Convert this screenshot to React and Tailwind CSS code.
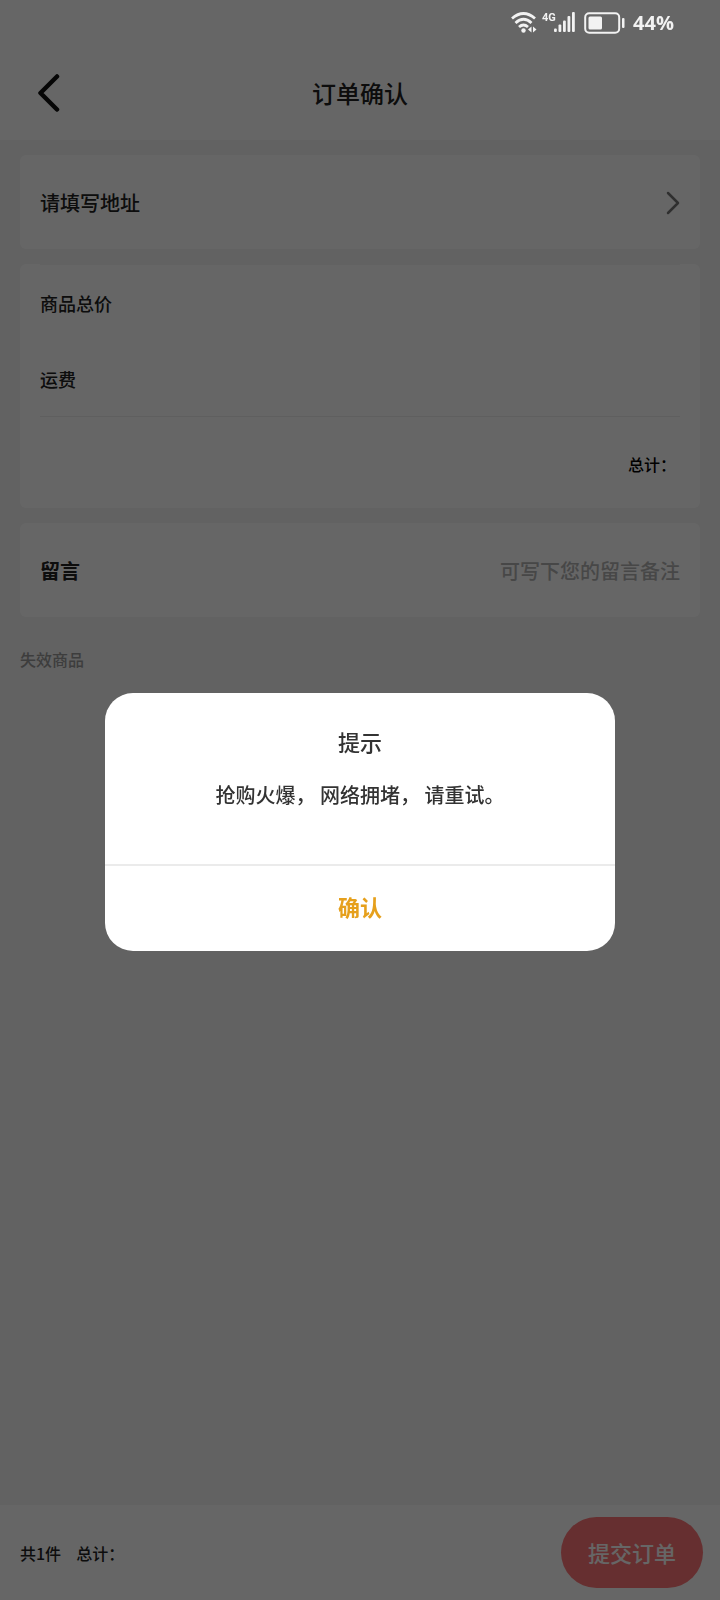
import React from "react";

function StatusBar() {
  return (
    <div className="relative z-20 flex h-[46px] items-center justify-end pr-[46px] text-[#f2f2f2]">
      <svg className="mr-1 h-6 w-7" viewBox="0 0 28 24" fill="none" stroke="currentColor" strokeWidth="2.800">
        <path d="M2 7.5 Q13.5 -2.5 25 7.5" />
        <path d="M5.5 12 Q13.5 4.5 21.5 12" />
        <path d="M9 16 Q13.5 12 18 16" />
        <circle cx="13.5" cy="19.5" r="2.2" fill="currentColor" stroke="none" />
        <path d="M21.5 15.5v6l-3.5-3zM23 15.500v6l3.500-3z" fill="currentColor" stroke="none" />
      </svg>
      <svg className="mr-2 h-6 w-[34px]" viewBox="0 0 34 24" fill="currentColor">
        <text x="0" y="10" fontSize="11" fontWeight="700" fontFamily="'Liberation Sans Narrow', Roboto, sans-serif">4G</text>
        <rect x="12" y="17.500" width="2.800" height="3.500" rx="1" />
        <rect x="16.500" y="13.500" width="2.800" height="7.500" rx="1" />
        <rect x="21" y="9.500" width="2.800" height="11.500" rx="1" />
        <rect x="25.500" y="5" width="2.800" height="16" rx="1" />
        <rect x="30" y="1" width="2.800" height="20" rx="1" />
      </svg>
      <svg className="mr-2 h-6 w-[41px]" viewBox="0 0 41 24" fill="none">
        <rect x="1.200" y="2.200" width="34" height="19.600" rx="4" stroke="currentColor" strokeWidth="2" />
        <rect x="4.500" y="5.500" width="13.500" height="13" rx="1.500" fill="currentColor" />
        <rect x="38" y="7" width="2.500" height="10" rx="1" fill="currentColor" />
      </svg>
      <span className="font-['Open_Sans',sans-serif] text-xl leading-6 font-bold">44%</span>
    </div>
  );
}

function Header() {
  return (
    <div className="grid h-[94px] grid-cols-[1fr_auto_1fr] items-center pl-9">
      <button aria-label="返回" className="w-6">
        <svg className="h-10 w-6" viewBox="0 0 24 40" fill="none" stroke="#111" strokeWidth="4.500" strokeLinecap="round" strokeLinejoin="round">
          <path d="M21 3.500 4.500 20 21 36.500" />
        </svg>
      </button>
      <h1 className="pr-9 text-2xl font-medium text-[#222]">订单确认</h1>
    </div>
  );
}

function Dialog() {
  return (
    <div className="fixed inset-0 z-10 flex items-center justify-center bg-black/60 pt-11">
      <div role="dialog" aria-modal="true" aria-labelledby="dialog-title" className="w-[510px] max-w-[90%] overflow-hidden rounded-[28px] bg-white text-center text-[#333]">
        <div className="px-8 pt-8 pb-[53px]">
          <h2 id="dialog-title" className="text-[22px] leading-8 font-medium">提示</h2>
          <p className="mt-[22px] text-xl leading-8 font-medium">抢购火爆， 网络拥堵， 请重试。</p>
        </div>
        <button className="block h-[87px] w-full border-t-2 border-[#ebebeb] pb-1 text-[22px] font-bold text-[#e6a01c]">确认</button>
      </div>
    </div>
  );
}

export default function App() {
  return (
    <div className="flex min-h-screen flex-col bg-[#f4f4f4] font-['Noto_Sans_CJK_SC',sans-serif] font-medium text-[#222]">
      <header className="bg-white">
        <StatusBar />
        <Header />
      </header>

      <main className="flex flex-1 flex-col gap-[15px] px-5 pt-[15px]">
        <a href="#address" className="flex h-[94px] items-center justify-between rounded-md bg-white px-5 pt-0.5 text-xl">
          请填写地址
          <svg className="h-6 w-3.5" viewBox="0 0 14 24" fill="none" stroke="#777" strokeWidth="2.500" strokeLinecap="round" strokeLinejoin="round">
            <path d="M2 2 12 12 2 22" />
          </svg>
        </a>

        <section className="rounded-md bg-white px-5 text-lg">
          <div className="flex h-[77px] items-center border-t border-[#f4f4f4]">商品总价</div>
          <div className="flex h-[76px] items-center border-b border-[#ededed]">运费</div>
          <div className="flex h-[91px] items-center justify-end pt-0.5 pr-1 text-base text-black">总计：</div>
        </section>

        <div className="flex h-[94px] items-center justify-between rounded-md bg-white px-5 pt-0.5 text-xl">
          <label htmlFor="note" className="font-bold">留言</label>
          <input id="note" placeholder="可写下您的留言备注" className="w-80 text-right outline-none placeholder:text-[#b2b2b2]" />
        </div>

        <p className="mt-[15px] text-base leading-6 text-[#999]">失效商品</p>
      </main>

      <footer className="flex h-[95px] items-center justify-between bg-white pr-[17px] pl-5">
        <div className="flex gap-[15px] text-base">
          <span>共1件</span>
          <span>总计：</span>
        </div>
        <button className="h-[71px] w-[142px] rounded-full bg-[#ff7678] text-[22px] font-medium text-white">提交订单</button>
      </footer>

      <Dialog />
    </div>
  );
}
